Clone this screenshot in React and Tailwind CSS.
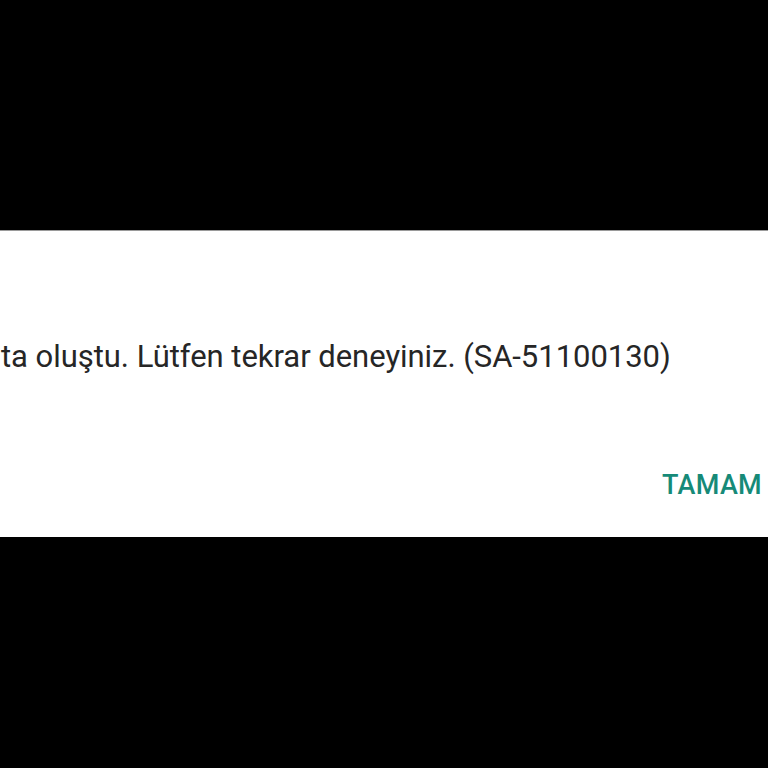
export default function App() {
  return (
    <div className="flex h-[768px] w-[768px] flex-col overflow-hidden bg-black" style={{ fontFamily: 'Roboto, "Noto Sans", sans-serif' }}>
      <div className="h-[230px] shrink-0" />
      <div className="flex h-[307px] shrink-0 flex-col border-t border-[#9a9a9a] bg-white">
        <p className="mt-[106px] whitespace-nowrap pl-[1px] text-[31px] leading-[40px] tracking-[-0.04px] text-[#262626]">
          ta oluştu. Lütfen tekrar deneyiniz. (SA-51100130)
        </p>
        <div className="mt-[92px] flex justify-end pr-[6px]">
          <button className="text-[27px] font-medium leading-[32px] tracking-[0.3px] text-[#168a78]">TAMAM</button>
        </div>
      </div>
      <div className="flex-1" />
    </div>
  );
}
